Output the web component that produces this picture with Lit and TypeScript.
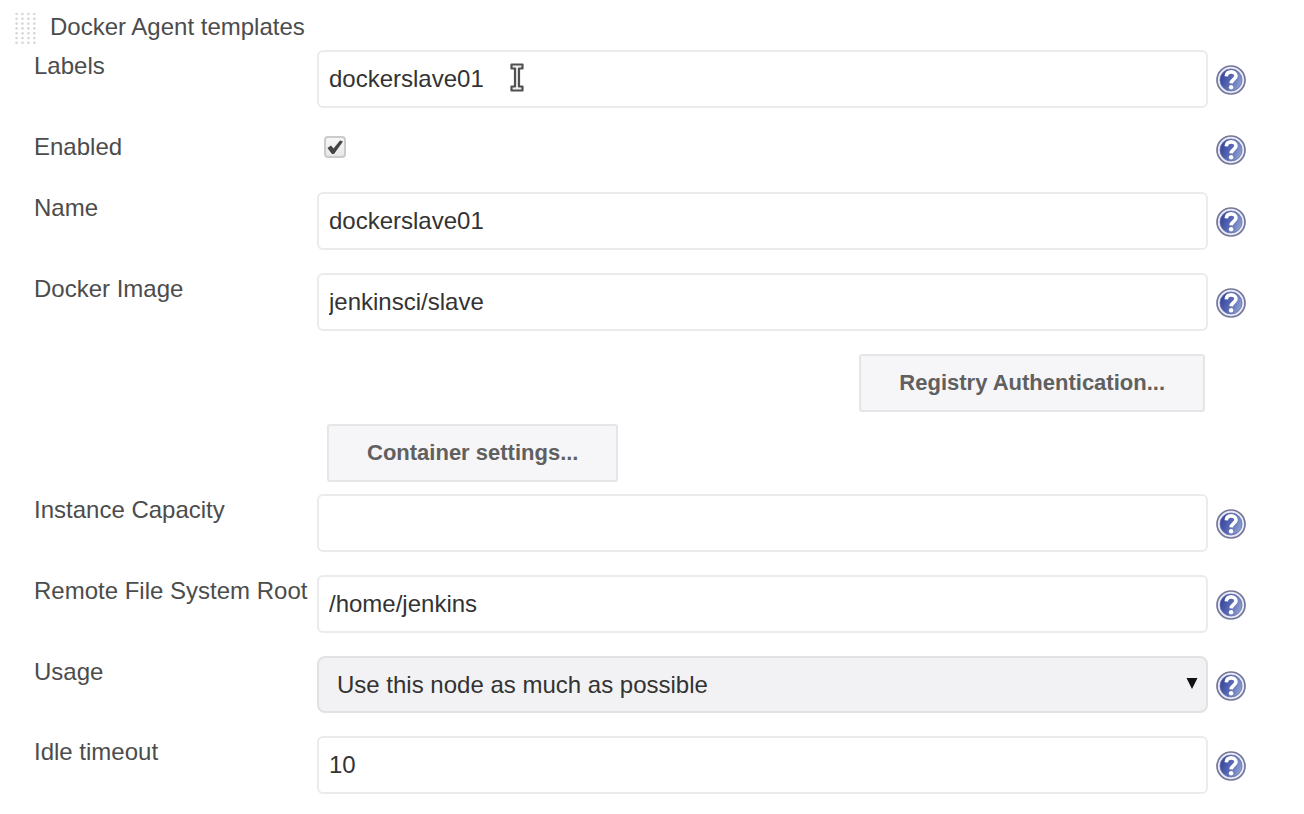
import { LitElement, html, css, svg, nothing, TemplateResult } from "lit";
import { customElement, property } from "lit/decorators.js";

@customElement("help-button")
class HelpButton extends LitElement {
  @property() topic = "";

  static styles = css`
    :host { display: block; }
    .help { display: block; width: 30px; height: 30px; padding: 0; border: 0; background: none; cursor: pointer; }
    .glyph { display: block; width: 30px; height: 30px; }
  `;

  render() {
    return html`<button class="help" type="button" aria-label="Help for ${this.topic}">
      <svg class="glyph" viewBox="0 0 30 30" aria-hidden="true">
        <defs>
          <linearGradient id="disc" x1="0" y1="0.3" x2="1" y2="0.7">
            <stop offset="0" stop-color="#35429a" />
            <stop offset="0.5" stop-color="#5a6bb4" />
            <stop offset="1" stop-color="#93a5d4" />
          </linearGradient>
        </defs>
        <circle cx="15" cy="15" r="14" fill="#e9ebf7" stroke="#74779a" stroke-width="1.7" />
        <circle cx="15" cy="15" r="11" fill="url(#disc)" stroke="#6470b0" stroke-width="0.8" />
        <path d="M10.3 11.4C10.5 8 12.6 6.9 15.2 6.9C18.2 6.9 20 8.6 20 11C20 14.4 15.3 14.4 15.1 18.4"
          fill="none" stroke="#fff" stroke-width="3.6" />
        <circle cx="15.1" cy="22.3" r="2.2" fill="#fff" />
      </svg>
    </button>`;
  }
}

@customElement("app-root")
class AppRoot extends LitElement {
  static styles = css`
    :host {
      display: block;
      background: #fff;
      color: #4c4c4c;
      font: 24px/32px "Liberation Sans", Arial, sans-serif;
    }
    * { box-sizing: border-box; }
    .page { padding: 11px 58px 20px 15px; }
    .heading { display: flex; align-items: flex-start; gap: 14px; height: 39px; }
    .grip { width: 21px; height: 34px; flex: none; }
    .title { margin: 0; font: inherit; }
    .form { display: flex; flex-direction: column; padding-left: 19px; }
    .row {
      display: grid;
      grid-template-columns: 283px minmax(0, 1fr) 30px;
      align-items: start;
      padding-bottom: 23px;
    }
    .row.tight { padding-bottom: 12px; }
    .row.check { min-height: 61px; padding-bottom: 0; }
    .label { white-space: nowrap; }
    .control { position: relative; margin-right: 8px; }
    .help { margin-top: 15px; }
    .check .help { margin-top: 4px; }
    .text, .select {
      display: block;
      width: 100%;
      height: 58px;
      margin: 0;
      border: 2px solid #ebebed;
      border-radius: 6px;
      background: #fff;
      color: #333;
      font: inherit;
      outline: none;
    }
    .text { padding: 0 10px; }
    .select { appearance: none; padding: 0 40px 0 18px; background: #f2f2f4; border-color: #e2e2e4; border-radius: 8px; height: 57px; }
    .arrow { position: absolute; right: 10px; top: 21px; width: 12px; height: 13px; pointer-events: none; }
    .pointer { position: absolute; left: 193px; top: 13px; width: 14px; height: 29px; pointer-events: none; }
    .tick { position: relative; width: 22px; height: 22px; margin: 5px 0 0 7px; }
    .box {
      appearance: none;
      display: block;
      width: 22px;
      height: 22px;
      margin: 0;
      border: 2px solid #cbcbcb;
      border-radius: 4px;
      background: linear-gradient(#f6f6f6, #e8e8e8);
    }
    .mark { position: absolute; left: 0; top: 0; width: 22px; height: 22px; pointer-events: none; visibility: hidden; }
    .box:checked + .mark { visibility: visible; }
    .button {
      height: 58px;
      padding: 0 38px;
      border: 2px solid #e6e6e8;
      border-radius: 3px;
      background: #f6f6f8;
      color: #606060;
      font: bold 22px/30px "Liberation Sans", Arial, sans-serif;
      white-space: nowrap;
    }
    .start { display: flex; padding-left: 10px; }
    .end { display: flex; justify-content: flex-end; padding-right: 3px; }
  `;

  private field(id: string, label: string, control: TemplateResult, kind = "") {
    return html`<div class="row ${kind}">
      <label class="label" for=${id}>${label}</label>
      <div class="control">${control}</div>
      <help-button class="help" topic=${label}></help-button>
    </div>`;
  }

  private text(id: string, label: string, value: string, overlay: unknown = nothing) {
    return this.field(id, label, html`<input class="text" id=${id} type="text" spellcheck="false" .value=${value} />${overlay}`);
  }

  private action(label: string, align: string) {
    return html`<div class="row tight">
      <span></span>
      <div class="control ${align}"><button class="button" type="button">${label}</button></div>
    </div>`;
  }

  render() {
    const dots = [];
    for (let y = 0; y < 7; y++) {
      for (let x = 0; x < 4; x++) dots.push(svg`<circle cx=${1.6 + x * 5.9} cy=${3 + y * 4.8} r="1.3" />`);
    }
    const ibeam = html`<svg class="pointer" viewBox="0 0 14 29" aria-hidden="true">
      <path d="M1.5 1.5H12.5V5.5H9V23.5H12.5V27.5H1.5V23.5H5V5.5H1.5Z" fill="#eee" stroke="#505050" stroke-width="2.2" stroke-linejoin="round" />
    </svg>`;
    return html`<main class="page">
      <header class="heading">
        <svg class="grip" viewBox="0 0 21 34" fill="#d6d6d6" aria-hidden="true">${dots}</svg>
        <h1 class="title">Docker Agent templates</h1>
      </header>
      <form class="form">
        ${this.text("labels", "Labels", "dockerslave01", ibeam)}
        ${this.field("enabled", "Enabled", html`<div class="tick">
          <input class="box" id="enabled" type="checkbox" checked />
          <svg class="mark" viewBox="0 0 22 22" aria-hidden="true">
            <path d="M3.5 12L7 9.5L9.5 12.5L16 4.5L19 5.5L10 18H8Z" fill="#444" />
          </svg>
        </div>`, "check")}
        ${this.text("name", "Name", "dockerslave01")}
        ${this.text("image", "Docker Image", "jenkinsci/slave")}
        ${this.action("Registry Authentication...", "end")}
        ${this.action("Container settings...", "start")}
        ${this.text("capacity", "Instance Capacity", "")}
        ${this.text("root", "Remote File System Root", "/home/jenkins")}
        ${this.field("usage", "Usage", html`<select class="select" id="usage">
            <option>Use this node as much as possible</option>
          </select>
          <svg class="arrow" viewBox="0 0 12 13" aria-hidden="true"><path d="M0.5 1H11.5L6 12Z" fill="#111" /></svg>`)}
        ${this.text("idle", "Idle timeout", "10")}
      </form>
    </main>`;
  }
}
